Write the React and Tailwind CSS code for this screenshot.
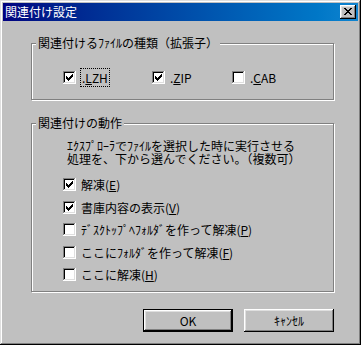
import React from 'react';

const raised = 'shadow-[inset_-1px_-1px_0_#000,inset_1px_1px_0_#fff,inset_-2px_-2px_0_#808080,inset_2px_2px_0_#dfdfdf]';

function CheckBox({ checked }) {
  return (
    <span className="relative block w-[13px] h-[13px] shrink-0 bg-white shadow-[inset_-1px_-1px_0_#fff,inset_1px_1px_0_#808080,inset_-2px_-2px_0_#dfdfdf,inset_2px_2px_0_#000]">
      {checked && (
        <svg className="absolute left-[3px] top-[3px]" width="7" height="7" viewBox="0 0 7 7" shapeRendering="crispEdges">
          <path d="M6 0h1v1h-1z M5 1h2v1h-2z M0 2h1v1h-1z M4 2h3v1h-3z M0 3h2v1h-2z M3 3h3v1h-3z M0 4h5v1h-5z M1 5h3v1h-3z M2 6h1v1h-1z" fill="#000" />
        </svg>
      )}
    </span>
  );
}

function Option({ checked, children, className = '' }) {
  return (
    <div className={`flex items-center h-[13px] ${className}`}>
      <CheckBox checked={checked} />
      <span className="ml-[5px] leading-[12px]">{children}</span>
    </div>
  );
}

function Group({ label, className, children }) {
  return (
    <div className={`relative border border-[#808080] shadow-[inset_1px_1px_0_#fff,1px_1px_0_#fff] ${className}`}>
      <span className="absolute left-[4px] top-[-7px] px-[2px] bg-[#c0c0c0] leading-[12px] whitespace-nowrap">{label}</span>
      {children}
    </div>
  );
}

export default function App() {
  return (
    <div className="w-[361px] h-[345px] bg-[#c0c0c0] p-[3px] flex flex-col text-[12px] text-black font-['Noto_Sans_CJK_JP',sans-serif] shadow-[inset_-1px_-1px_0_#000,inset_1px_1px_0_#dfdfdf,inset_-2px_-2px_0_#808080,inset_2px_2px_0_#fff]">
      {/* タイトルバー */}
      <div className="h-[18px] flex items-center justify-between bg-linear-to-r from-[#000080] to-[#1084d0] pl-[2px] pr-[2px]">
        <span className="text-white leading-[12px]">関連付け設定</span>
        <div className={`relative w-[16px] h-[14px] bg-[#c0c0c0] ${raised}`}>
          <svg className="absolute left-[4px] top-[3px]" width="8" height="7" viewBox="0 0 8 7" shapeRendering="crispEdges">
            <path d="M0 0h2v1h-2z M6 0h2v1h-2z M1 1h2v1h-2z M5 1h2v1h-2z M2 2h4v1h-4z M3 3h2v1h-2z M2 4h4v1h-4z M1 5h2v1h-2z M5 5h2v1h-2z M0 6h2v1h-2z M6 6h2v1h-2z" fill="#000" />
          </svg>
        </div>
      </div>

      <div className="pl-[28px] pt-[22px] flex flex-col">
        <Group label="関連付けるﾌｧｲﾙの種類（拡張子）" className="w-[303px] h-[57px] pt-[27px] pl-[31px]">
          <div className="flex">
            <Option checked className="w-[89px]">
              <span className="outline outline-1 outline-dotted outline-black px-[1px]">.<u>L</u>ZH</span>
            </Option>
            <Option checked className="w-[80px]">.<u>Z</u>IP</Option>
            <Option>.<u>C</u>AB</Option>
          </div>
        </Group>

        <Group label="関連付けの動作" className="mt-[23px] w-[303px] h-[169px] pt-[15px] pl-[31px]">
          <p className="ml-[4px] leading-[13px]">
            ｴｸｽﾌﾟﾛｰﾗでﾌｧｲﾙを選択した時に実行させる
            <br />
            処理を、下から選んでください。（複数可）
          </p>
          <div className="mt-[13px] flex flex-col">
            <Option checked>解凍(<u>E</u>)</Option>
            <Option checked className="mt-[10px]">書庫内容の表示(<u>V</u>)</Option>
            <Option className="mt-[9px]">ﾃﾞｽｸﾄｯﾌﾟﾍﾌｫﾙﾀﾞを作って解凍(<u>P</u>)</Option>
            <Option className="mt-[10px]">ここにﾌｫﾙﾀﾞを作って解凍(<u>F</u>)</Option>
            <Option className="mt-[9px]">ここに解凍(<u>H</u>)</Option>
          </div>
        </Group>

        <div className="mt-[17px] w-[303px] flex justify-end gap-[11px]">
          <button className={`w-[90px] h-[23px] bg-[#c0c0c0] border border-black ${raised}`}>OK</button>
          <button className={`w-[90px] h-[23px] bg-[#c0c0c0] ${raised}`}>ｷｬﾝｾﾙ</button>
        </div>
      </div>
    </div>
  );
}
